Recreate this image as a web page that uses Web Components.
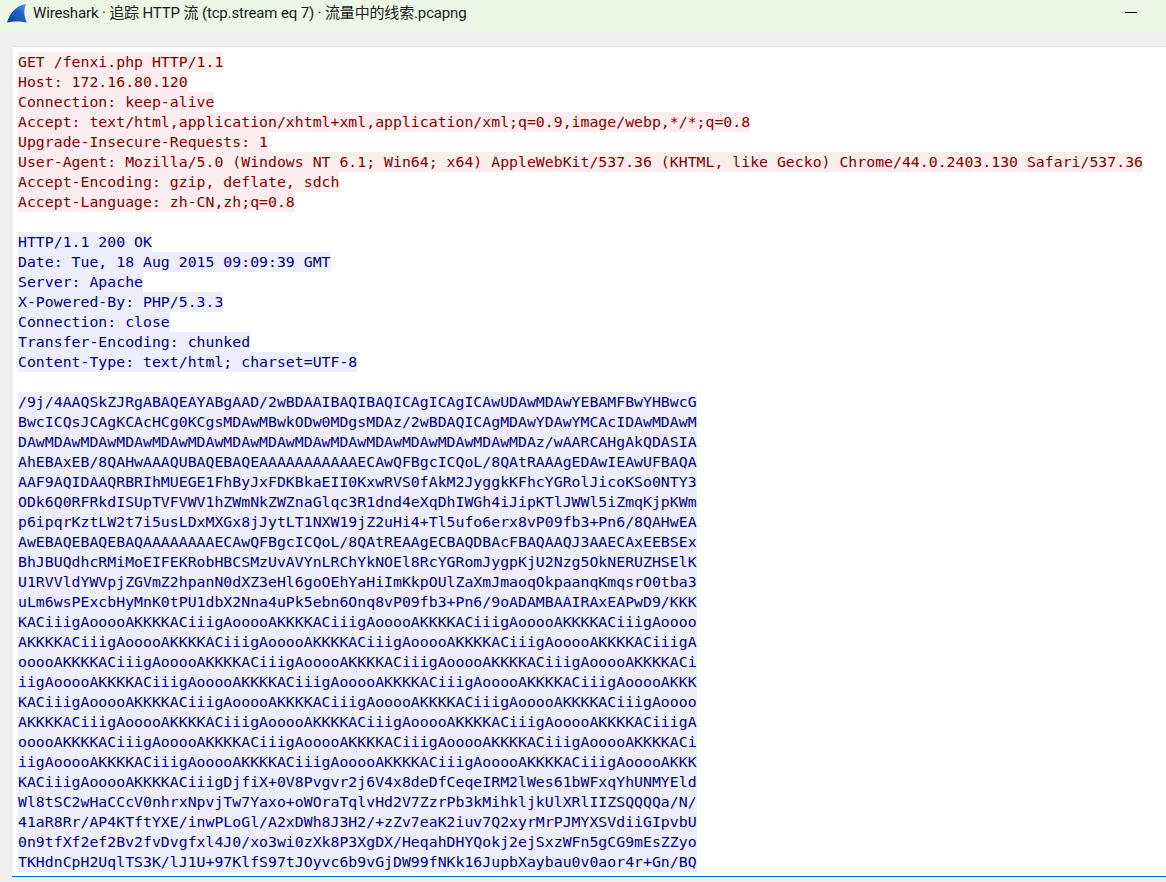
<!DOCTYPE html>
<html>
<head>
<meta charset="utf-8">
<title>Wireshark</title>
<style>
    html, body { margin: 0; padding: 0; height: 100%; overflow: hidden; }
</style>
</head>
<body>
<ws-window>
    <ws-titlebar slot="title">Wireshark · 追踪 HTTP 流 (tcp.stream eq 7) · 流量中的线索.pcapng</ws-titlebar>
    <ws-stream>
        <ws-line kind="client">GET /fenxi.php HTTP/1.1</ws-line>
        <ws-line kind="client">Host: 172.16.80.120</ws-line>
        <ws-line kind="client">Connection: keep-alive</ws-line>
        <ws-line kind="client">Accept: text/html,application/xhtml+xml,application/xml;q=0.9,image/webp,*/*;q=0.8</ws-line>
        <ws-line kind="client">Upgrade-Insecure-Requests: 1</ws-line>
        <ws-line kind="client">User-Agent: Mozilla/5.0 (Windows NT 6.1; Win64; x64) AppleWebKit/537.36 (KHTML, like Gecko) Chrome/44.0.2403.130 Safari/537.36</ws-line>
        <ws-line kind="client">Accept-Encoding: gzip, deflate, sdch</ws-line>
        <ws-line kind="client">Accept-Language: zh-CN,zh;q=0.8</ws-line>
        <ws-line></ws-line>
        <ws-line kind="server">HTTP/1.1 200 OK</ws-line>
        <ws-line kind="server">Date: Tue, 18 Aug 2015 09:09:39 GMT</ws-line>
        <ws-line kind="server">Server: Apache</ws-line>
        <ws-line kind="server">X-Powered-By: PHP/5.3.3</ws-line>
        <ws-line kind="server">Connection: close</ws-line>
        <ws-line kind="server">Transfer-Encoding: chunked</ws-line>
        <ws-line kind="server">Content-Type: text/html; charset=UTF-8</ws-line>
        <ws-line></ws-line>
        <ws-line kind="server">/9j/4AAQSkZJRgABAQEAYABgAAD/2wBDAAIBAQIBAQICAgICAgICAwUDAwMDAwYEBAMFBwYHBwcG</ws-line>
        <ws-line kind="server">BwcICQsJCAgKCAcHCg0KCgsMDAwMBwkODw0MDgsMDAz/2wBDAQICAgMDAwYDAwYMCAcIDAwMDAwM</ws-line>
        <ws-line kind="server">DAwMDAwMDAwMDAwMDAwMDAwMDAwMDAwMDAwMDAwMDAwMDAwMDAwMDAwMDAz/wAARCAHgAkQDASIA</ws-line>
        <ws-line kind="server">AhEBAxEB/8QAHwAAAQUBAQEBAQEAAAAAAAAAAAECAwQFBgcICQoL/8QAtRAAAgEDAwIEAwUFBAQA</ws-line>
        <ws-line kind="server">AAF9AQIDAAQRBRIhMUEGE1FhByJxFDKBkaEII0KxwRVS0fAkM2JyggkKFhcYGRolJicoKSo0NTY3</ws-line>
        <ws-line kind="server">ODk6Q0RFRkdISUpTVFVWV1hZWmNkZWZnaGlqc3R1dnd4eXqDhIWGh4iJipKTlJWWl5iZmqKjpKWm</ws-line>
        <ws-line kind="server">p6ipqrKztLW2t7i5usLDxMXGx8jJytLT1NXW19jZ2uHi4+Tl5ufo6erx8vP09fb3+Pn6/8QAHwEA</ws-line>
        <ws-line kind="server">AwEBAQEBAQEBAQAAAAAAAAECAwQFBgcICQoL/8QAtREAAgECBAQDBAcFBAQAAQJ3AAECAxEEBSEx</ws-line>
        <ws-line kind="server">BhJBUQdhcRMiMoEIFEKRobHBCSMzUvAVYnLRChYkNOEl8RcYGRomJygpKjU2Nzg5OkNERUZHSElK</ws-line>
        <ws-line kind="server">U1RVVldYWVpjZGVmZ2hpanN0dXZ3eHl6goOEhYaHiImKkpOUlZaXmJmaoqOkpaanqKmqsrO0tba3</ws-line>
        <ws-line kind="server">uLm6wsPExcbHyMnK0tPU1dbX2Nna4uPk5ebn6Onq8vP09fb3+Pn6/9oADAMBAAIRAxEAPwD9/KKK</ws-line>
        <ws-line kind="server">KACiiigAooooAKKKKACiiigAooooAKKKKACiiigAooooAKKKKACiiigAooooAKKKKACiiigAoooo</ws-line>
        <ws-line kind="server">AKKKKACiiigAooooAKKKKACiiigAooooAKKKKACiiigAooooAKKKKACiiigAooooAKKKKACiiigA</ws-line>
        <ws-line kind="server">ooooAKKKKACiiigAooooAKKKKACiiigAooooAKKKKACiiigAooooAKKKKACiiigAooooAKKKKACi</ws-line>
        <ws-line kind="server">iigAooooAKKKKACiiigAooooAKKKKACiiigAooooAKKKKACiiigAooooAKKKKACiiigAooooAKKK</ws-line>
        <ws-line kind="server">KACiiigAooooAKKKKACiiigAooooAKKKKACiiigAooooAKKKKACiiigAooooAKKKKACiiigAoooo</ws-line>
        <ws-line kind="server">AKKKKACiiigAooooAKKKKACiiigAooooAKKKKACiiigAooooAKKKKACiiigAooooAKKKKACiiigA</ws-line>
        <ws-line kind="server">ooooAKKKKACiiigAooooAKKKKACiiigAooooAKKKKACiiigAooooAKKKKACiiigAooooAKKKKACi</ws-line>
        <ws-line kind="server">iigAooooAKKKKACiiigAooooAKKKKACiiigAooooAKKKKACiiigAooooAKKKKACiiigAooooAKKK</ws-line>
        <ws-line kind="server">KACiiigAooooAKKKKACiiigDjfiX+0V8Pvgvr2j6V4x8deDfCeqeIRM2lWes61bWFxqYhUNMYEld</ws-line>
        <ws-line kind="server">Wl8tSC2wHaCCcV0nhrxNpvjTw7Yaxo+oWOraTqlvHd2V7ZzrPb3kMihkljkUlXRlIIZSQQQQa/N/</ws-line>
        <ws-line kind="server">41aR8Rr/AP4KTftYXE/inwPLoGl/A2xDWh8J3H2/+zZv7eaK2iuv7Q2xyrMrPJMYXSVdiiGIpvbU</ws-line>
        <ws-line kind="server">0n9tfXf2ef2Bv2fvDvgfxl4J0/xo3wi0zXk8P3XgDX/HeqahDHYQokj2ejSxzWFn5gCG9mEsZZyo</ws-line>
        <ws-line kind="server">TKHdnCpH2UqlTS3K/lJ1U+97KlfS97tJOyvc6b9vGjDW99fNKk16JupbXaybau0v0aor4r+Gn/BQ</ws-line>
    </ws-stream>
</ws-window>
<script>
// little helper so every element looks the same
function define(name, css, html) {
    const template = document.createElement('template');
    template.innerHTML = `<style>${css}</style>${html}`;
    customElements.define(name, class extends HTMLElement {
        constructor() {
            super();
            this.attachShadow({mode: 'open'});
            this.shadowRoot.appendChild(template.content.cloneNode(true));
        }
    });
}

define('ws-window', `
    :host {
        display: flex;
        flex-direction: column;
        width: 1166px;
        height: 882px;
        background: #efefef;
    }
    .body {
        flex: 1;
        min-height: 0;
        display: flex;
        padding: 14px 0 5px 12px;
    }
`, `
    <slot name="title"></slot>
    <div class="body"><slot></slot></div>
`);

define('ws-titlebar', `
    :host {
        display: flex;
        align-items: center;
        flex: none;
        height: 32px;
        padding-left: 7px;
        background: #ebf7e4;
        color: #1a1a1a;
        font: 15px Roboto, "Noto Sans CJK SC", sans-serif;
        letter-spacing: -0.15px;
    }
    svg { flex: none; margin: -4px 6px 0 0; }
    .text { flex: 1; margin-top: -10px; white-space: nowrap; }
    .min {
        flex: none;
        width: 12px;
        height: 1px;
        margin: -7px 29px 0 0;
        background: #000;
    }
`, `
    <svg width="20" height="20" viewBox="0 0 20 20">
        <defs>
            <linearGradient id="fin" x1="0" y1="1" x2="1" y2="0">
                <stop offset="0" stop-color="#123f9a"/>
                <stop offset="0.6" stop-color="#1f66c4"/>
                <stop offset="1" stop-color="#4ea3ea"/>
            </linearGradient>
        </defs>
        <path d="M0 18.5 C2 12 7 2 19 0 C16.5 6 17 13 20 18.5 C14 17 6 17 0 18.5 Z" fill="url(#fin)"/>
    </svg>
    <span class="text"><slot></slot></span>
    <span class="min"></span>
`);

define('ws-stream', `
    :host {
        display: block;
        flex: 1;
        min-width: 0;
        overflow: hidden;
        box-sizing: border-box;
        padding: 5px 0 0 6px;
        background: linear-gradient(#efefef, #efefef) left / 1px 100% no-repeat, #fff;
        border-top: 1px solid #e6e6e6;
        border-bottom: 1px solid #0067c0;
        font: 14.8px/20px "DejaVu Sans Mono", monospace;
        letter-spacing: 0.02px;
    }
`, `<slot></slot>`);

define('ws-line', `
    :host {
        display: block;
        height: 20px;
        white-space: pre;
    }
    span { display: inline-block; vertical-align: top; height: 20px; }
    :host([kind="client"]) span { background: #fbeded; color: #800000; }
    :host([kind="server"]) span { background: #ededfb; color: #000080; }
`, `<span><slot></slot></span>`);
</script>
</body>
</html>
